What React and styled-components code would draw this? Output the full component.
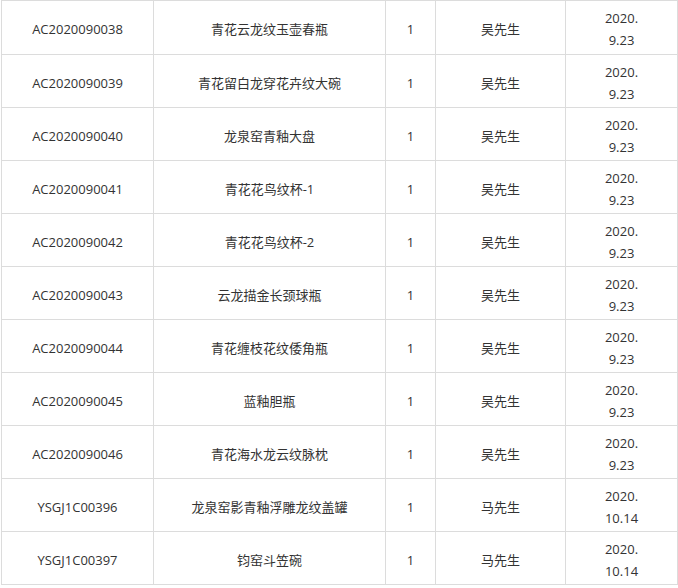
import React from "react";
import styled, { createGlobalStyle } from "styled-components";

const GlobalStyle = createGlobalStyle`
  body {
    margin: 0;
    background: #fff;
    font-family: "Open Sans", "Noto Sans CJK SC", sans-serif;
  }
`;

const Wrap = styled.div`
  padding-left: 1px;
`;

const Table = styled.table`
  border-collapse: collapse;
  table-layout: fixed;
  width: 677px;
  color: #333;
  font-size: 13px;
  line-height: 22px;
`;

const Cell = styled.td`
  border: 1px solid #dcdcdc;
  height: ${(p) => (p.$first ? 54 : 53)}px;
  padding: 3px 0 0;
  box-sizing: border-box;
  text-align: center;
  vertical-align: middle;
  width: ${(p) => p.$w}px;
`;

const DateLine = styled.span`
  display: block;
`;

const widths = [152, 232, 50, 130, 112];

const rows = [
  ["AC2020090038", "青花云龙纹玉壶春瓶", "1", "吴先生", "2020.", "9.23"],
  ["AC2020090039", "青花留白龙穿花卉纹大碗", "1", "吴先生", "2020.", "9.23"],
  ["AC2020090040", "龙泉窑青釉大盘", "1", "吴先生", "2020.", "9.23"],
  ["AC2020090041", "青花花鸟纹杯-1", "1", "吴先生", "2020.", "9.23"],
  ["AC2020090042", "青花花鸟纹杯-2", "1", "吴先生", "2020.", "9.23"],
  ["AC2020090043", "云龙描金长颈球瓶", "1", "吴先生", "2020.", "9.23"],
  ["AC2020090044", "青花缠枝花纹倭角瓶", "1", "吴先生", "2020.", "9.23"],
  ["AC2020090045", "蓝釉胆瓶", "1", "吴先生", "2020.", "9.23"],
  ["AC2020090046", "青花海水龙云纹脉枕", "1", "吴先生", "2020.", "9.23"],
  ["YSGJ1C00396", "龙泉窑影青釉浮雕龙纹盖罐", "1", "马先生", "2020.", "10.14"],
  ["YSGJ1C00397", "钧窑斗笠碗", "1", "马先生", "2020.", "10.14"],
];

export default function App() {
  return (
    <>
      <GlobalStyle />
      <Wrap>
        <Table>
          <tbody>
            {rows.map((r, i) => (
              <tr key={r[0]}>
                <Cell $w={widths[0]} $first={i === 0}>{r[0]}</Cell>
                <Cell $w={widths[1]} $first={i === 0}>{r[1]}</Cell>
                <Cell $w={widths[2]} $first={i === 0}>{r[2]}</Cell>
                <Cell $w={widths[3]} $first={i === 0}>{r[3]}</Cell>
                <Cell $w={widths[4]} $first={i === 0}>
                  <DateLine>{r[4]}</DateLine>
                  <DateLine>{r[5]}</DateLine>
                </Cell>
              </tr>
            ))}
          </tbody>
        </Table>
      </Wrap>
    </>
  );
}
